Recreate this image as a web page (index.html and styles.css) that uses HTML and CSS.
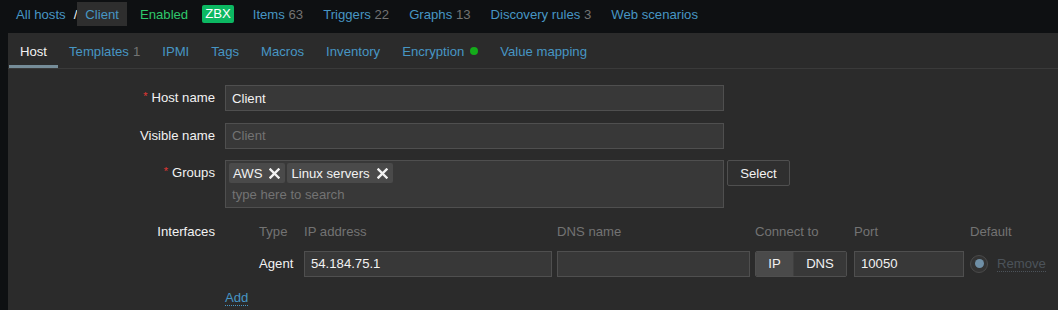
FILE: index.html
```html
<!DOCTYPE html>
<html lang="en">
<head>
<meta charset="utf-8">
<title>Host: Client</title>
<link rel="stylesheet" href="styles.css">
</head>
<body>
<nav class="topnav">
  <a class="link crumb">All hosts</a>
  <span class="sep">/</span>
  <span class="crumb-current">Client</span>
  <span class="status-enabled">Enabled</span>
  <span class="badge">ZBX</span>
  <a class="link nav-item">Items <span class="count">63</span></a>
  <a class="link nav-item">Triggers <span class="count">22</span></a>
  <a class="link nav-item">Graphs <span class="count">13</span></a>
  <a class="link nav-item">Discovery rules <span class="count">3</span></a>
  <a class="link nav-item">Web scenarios</a>
</nav>
<main class="panel">
  <ul class="tabs">
    <li class="tab active">Host</li>
    <li class="tab">Templates <span class="count">1</span></li>
    <li class="tab">IPMI</li>
    <li class="tab">Tags</li>
    <li class="tab">Macros</li>
    <li class="tab">Inventory</li>
    <li class="tab">Encryption <span class="dot"></span></li>
    <li class="tab">Value mapping</li>
  </ul>
  <form class="form">
    <label class="label req">Host name</label>
    <div class="field"><input class="input wide" type="text" value="Client"></div>

    <label class="label">Visible name</label>
    <div class="field"><input class="input wide" type="text" placeholder="Client"></div>

    <label class="label req">Groups</label>
    <div class="field groups-field">
      <div class="multiselect">
        <div class="chips">
          <span class="chip">AWS <svg class="x" viewBox="0 0 11 11" width="11" height="11"><path d="M1.5 1.5 L9.5 9.5 M9.5 1.5 L1.5 9.5" stroke="#f2f2f2" stroke-width="2.4" stroke-linecap="square"/></svg></span>
          <span class="chip">Linux servers <svg class="x" viewBox="0 0 11 11" width="11" height="11"><path d="M1.5 1.5 L9.5 9.5 M9.5 1.5 L1.5 9.5" stroke="#f2f2f2" stroke-width="2.4" stroke-linecap="square"/></svg></span>
        </div>
        <input class="ms-search" type="text" placeholder="type here to search">
      </div>
      <button class="btn" type="button">Select</button>
    </div>

    <label class="label label-if">Interfaces</label>
    <div class="field field-col">
      <div class="ifaces">
        <span></span>
        <span class="th">Type</span>
        <span class="th">IP address</span>
        <span class="th">DNS name</span>
        <span class="th">Connect to</span>
        <span class="th">Port</span>
        <span class="th th-default">Default</span>

        <span></span>
        <span class="if-type">Agent</span>
        <span class="cell"><input class="input ip" type="text" value="54.184.75.1"></span>
        <span class="cell"><input class="input dns" type="text" value=""></span>
        <span class="seg"><span class="seg-on">IP</span><span class="seg-off">DNS</span></span>
        <span class="cell"><input class="input port" type="text" value="10050"></span>
        <span class="def-cell"><span class="radio"><span class="radio-dot"></span></span><a class="remove">Remove</a></span>
      </div>
      <div class="add-row"><a class="add">Add</a></div>
    </div>
  </form>
</main>
</body>
</html>
```

FILE: styles.css
```css
* { box-sizing: border-box; }

html, body {
  margin: 0;
  height: 100%;
}

body {
  background: #0e1012;
  font: 13.15px "Liberation Sans", Arial, sans-serif;
  color: #f2f2f2;
  overflow: hidden;
}

a { text-decoration: none; }

.link { color: #4796c4; }
.count { color: #737373; }

/* top navigation */
.topnav {
  display: flex;
  align-items: center;
  height: 33px;
  padding: 0 0 5px 16px;
  white-space: nowrap;
}
.crumb { margin-right: 8px; }
.sep { color: #f2f2f2; }
.crumb-current {
  display: flex;
  align-items: center;
  height: 24px;
  padding: 0 8px;
  background: #2e2e2e;
  color: #4796c4;
}
.status-enabled {
  margin-left: 13px;
  color: #2ec86c;
}
.badge {
  margin-left: 14px;
  height: 18px;
  line-height: 18px;
  padding: 0 3px;
  border-radius: 2px;
  background: #0cb862;
  color: #ffffff;
}
.nav-item { margin-left: 20px; }
.badge + .nav-item { margin-left: 19px; }

/* panel */
.panel {
  margin-left: 8px;
  background: #2b2b2b;
  height: calc(100% - 33px);
}

.tabs {
  display: flex;
  list-style: none;
  margin: 0;
  padding: 0 0 0 1px;
  height: 36px;
  border-bottom: 1px solid #3a3a3a;
}
.tab {
  display: flex;
  align-items: center;
  gap: 4px;
  height: 35px;
  padding: 1px 11px 0;
  color: #4796c4;
  white-space: nowrap;
}
.tab.active {
  color: #f2f2f2;
  box-shadow: inset 0 -3px 0 #768d99;
}
.dot {
  display: inline-block;
  width: 8px;
  height: 8px;
  margin-left: 2px;
  border-radius: 50%;
  background: #14ab1a;
}

/* form */
.form {
  display: grid;
  grid-template-columns: 207px 1fr;
  column-gap: 10px;
  row-gap: 11.5px;
  padding-top: 16px;
}
.label {
  display: block;
  height: 26px;
  text-align: right;
  line-height: 26px;
  color: #f2f2f2;
}
.req::before {
  content: "*";
  position: relative;
  top: -2px;
  color: #e33734;
  font-size: 11px;
  line-height: 0;
  margin-right: 4px;
}
.label-if { height: 24px; line-height: 24px; }

.field { display: flex; }
.field-col { flex-direction: column; align-items: flex-start; }
.cell { display: flex; }

.input {
  display: block;
  height: 26px;
  padding: 0 6px;
  background: #383838;
  border: 1px solid #4f4f4f;
  border-radius: 0;
  color: #f2f2f2;
  font: 13.15px "Liberation Sans", Arial, sans-serif;
  outline: none;
}
.input::placeholder { color: #737373; }
.wide { width: 499px; }

.groups-field {
  align-items: flex-start;
  gap: 3px;
}
.multiselect {
  width: 499px;
  height: 48px;
  padding: 2px 3px;
  background: #383838;
  border: 1px solid #4f4f4f;
}
.chips { display: flex; gap: 2px; }
.chip {
  display: flex;
  align-items: center;
  gap: 7px;
  height: 20px;
  padding: 0 5px 0 4px;
  background: #4a4a4a;
  border-radius: 2px;
  color: #f2f2f2;
}
.x { display: block; }
.ms-search {
  display: block;
  width: 100%;
  height: 22px;
  padding: 0 0 0 3px;
  background: transparent;
  border: 0;
  color: #f2f2f2;
  font: 13.15px "Liberation Sans", Arial, sans-serif;
  outline: none;
}
.ms-search::placeholder { color: #737373; }

.btn {
  width: 63px;
  height: 26px;
  padding: 0;
  background: #2f2f2f;
  border: 1px solid #4f4f4f;
  border-radius: 2px;
  color: #f2f2f2;
  font: 13.15px "Liberation Sans", Arial, sans-serif;
}

/* interfaces */
.ifaces {
  display: grid;
  grid-template-columns: 34px 45px 253px 198px 99px 116px auto;
  grid-template-rows: 24px 26px;
  row-gap: 7px;
  align-items: center;
  white-space: nowrap;
}
.th { color: #737373; }
.if-type { color: #f2f2f2; }
.ip { width: 248px; }
.dns { width: 193px; }
.port { width: 110px; }

.seg {
  display: flex;
  width: 92px;
  height: 26px;
  border: 1px solid #4f4f4f;
  border-radius: 2px;
  overflow: hidden;
}
.seg-on, .seg-off {
  display: flex;
  align-items: center;
  justify-content: center;
}
.seg-on { width: 37px; background: #4a4a4a; }
.seg-off { flex: 1; background: #383838; border-left: 1px solid #404040; }

.def-cell {
  display: flex;
  align-items: center;
  gap: 9px;
}
.radio {
  display: flex;
  align-items: center;
  justify-content: center;
  width: 18px;
  height: 18px;
  border-radius: 50%;
  background: #333333;
  border: 1px solid #4a4a4a;
}
.radio-dot {
  width: 9px;
  height: 9px;
  border-radius: 50%;
  background: #6f8fa6;
}
.remove {
  color: #4c535a;
  border-bottom: 1px dotted #4c535a;
  line-height: 15px;
}

.add-row {
  margin-top: 13px;
  line-height: 16px;
}
.add {
  color: #4796c4;
  border-bottom: 1px dotted #4796c4;
}
```
